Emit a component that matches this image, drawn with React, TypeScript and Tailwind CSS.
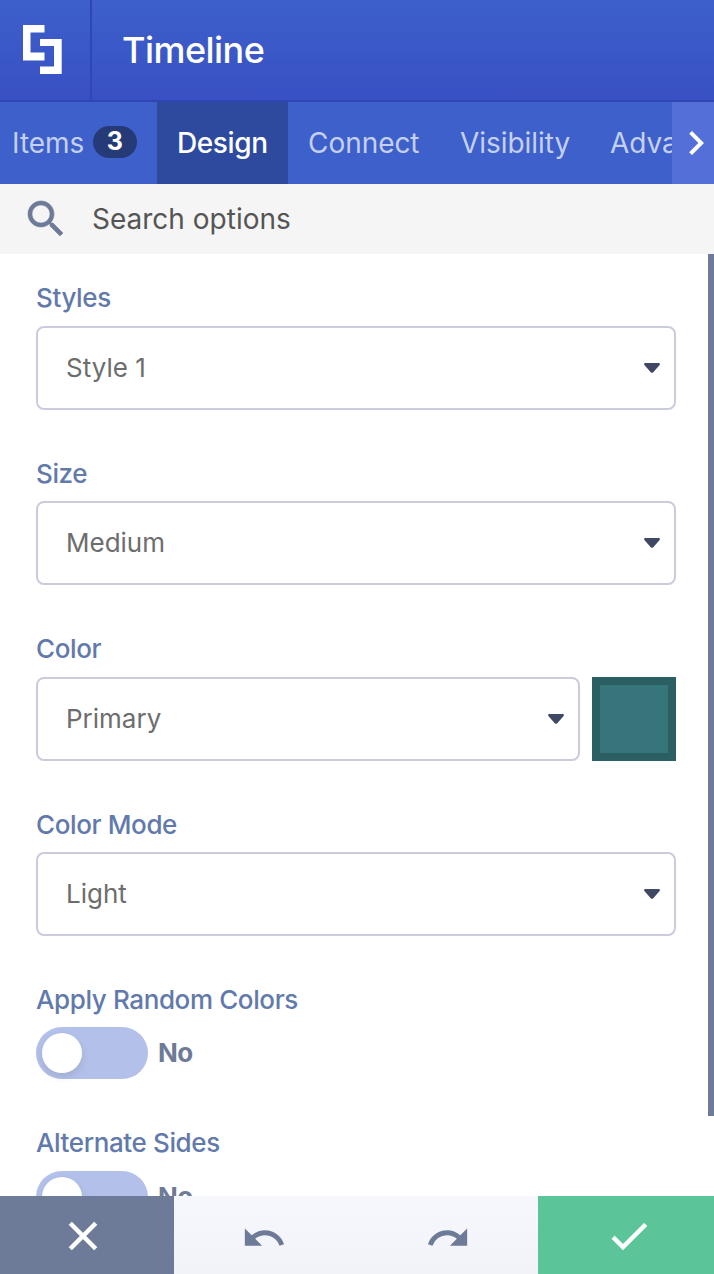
import { useState } from 'react';
import { MdChevronRight, MdRedo, MdUndo } from 'react-icons/md';

const tabs = [
  { name: 'Items', count: 3, className: 'w-[157px] pl-3' },
  { name: 'Design', className: 'w-[131px] pl-5' },
  { name: 'Connect', className: 'w-[152px] pl-5' },
  { name: 'Visibility', className: 'w-[150px] pl-5' },
  { name: 'Advanced', className: 'w-[170px] pl-5' },
];

const icons = {
  search:
    'M15.5 14h-.79l-.28-.27C15.41 12.590 16 11.110 16 9.500 16 5.910 13.090 3 9.500 3S3 5.910 3 9.500 5.910 16 9.500 16c1.610 0 3.090-.59 4.230-1.570l.27.28v.79l5 4.990L20.490 19l-4.990-5zm-6 0C7.010 14 5 11.990 5 9.500S7.010 5 9.500 5 14 7.010 14 9.500 11.990 14 9.500 14z',
  close: 'M19 6.410 17.590 5 12 10.590 6.410 5 5 6.410 10.590 12 5 17.590 6.410 19 12 13.410 17.590 19 19 17.590 13.410 12z',
  check: 'M9 16.170 4.830 12l-1.420 1.410L9 19 21 7l-1.410-1.410z',
};

const Icon = ({ name }: { name: keyof typeof icons }) => (
  <svg className="size-12" viewBox="0 0 24 24" fill="currentColor" stroke="currentColor" strokeWidth={0.3}>
    <path d={icons[name]} />
  </svg>
);

const Logo = () => (
  <svg className="h-[50px] w-10" viewBox="0 0 40 50" fill="#fff">
    <path d="M1 1h21.5v7.5h-14v20h14v8H1z" />
    <path d="M18 15h21.7v35H18v-7.5h14V22H18z" />
  </svg>
);

const Label = ({ children }: { children: string }) => (
  <span className="block h-8 text-[26px] leading-8 font-medium tracking-[-0.38px] text-[#6279ab]">{children}</span>
);

const SelectField = ({ label, value, swatch }: { label: string; value: string; swatch?: boolean }) => (
  <div className="h-[175.5px]">
    <Label>{label}</Label>
    <div className="mt-[11.9px] flex gap-3">
      <button className="flex h-[84px] flex-1 items-center justify-between rounded-lg border-2 border-[#caccde] bg-white pr-3.5 pl-7 text-[26px] text-[#6d6d6d]">
        <span className="pb-px">{value}</span>
        <svg className="h-2.5 w-4" viewBox="0 0 16 10" fill="#414863">
          <path d="M1 0h14q1.500.7.6 2L9.300 9.200q-1.300 1.300-2.600 0L.4 2Q-.5.7 1 0z" />
        </svg>
      </button>
      {swatch && <div className="size-[84px] border-8 border-[#2c5f63] bg-[#36767b]" />}
    </div>
  </div>
);

const ToggleField = ({ label }: { label: string }) => {
  const [on, setOn] = useState(false);

  return (
    <div className="h-[143.4px]">
      <Label>{label}</Label>
      <div className="mt-[11.2px] flex items-center gap-2.5">
        <button
          onClick={() => setOn(!on)}
          className={`flex h-[52px] w-28 items-center rounded-full px-1.5 ${on ? 'justify-end bg-[#3d60cb]' : 'bg-[#b3c0e9]'}`}
        >
          <span className="size-10 rounded-full bg-white shadow-[0_4px_8px_rgba(0,0,0,0.1)]" />
        </button>
        <span className="pb-px text-[26px] font-bold tracking-[-0.5px] text-[#6d7a98]">{on ? 'Yes' : 'No'}</span>
      </div>
    </div>
  );
};

export default function App() {
  const [active, setActive] = useState('Design');

  return (
    <div className="flex h-[1274px] w-[714px] flex-col overflow-hidden bg-white font-['Inter',sans-serif]">
      <header className="flex h-[102px] shrink-0 border-b-2 border-[#3046b5] bg-linear-to-b from-[#3d60cb] to-[#3850c3]">
        <div className="w-[92px] border-r-2 border-[#3046b5] pt-6 pl-[22px]">
          <Logo />
        </div>
        <h1 className="pl-[30px] text-[36px] leading-[100px] font-medium tracking-[-0.55px] text-white">Timeline</h1>
      </header>

      <nav className="flex h-[82px] shrink-0 bg-[#3d60cb]">
        <div className="flex min-w-0 flex-1 overflow-hidden">
          {tabs.map((tab) => (
            <button
              key={tab.name}
              onClick={() => setActive(tab.name)}
              className={`flex shrink-0 items-center text-[28px] ${tab.className} ${
                active === tab.name
                  ? 'bg-[#2e4a9f] font-medium tracking-[-0.4px] text-white'
                  : 'tracking-[-0.05px] text-[#c5d0f0]'
              }`}
            >
              {tab.name}
              {tab.count && (
                <span className="mb-0.5 ml-[9px] h-8 w-11 rounded-full bg-[#253a77] pr-px text-center text-[25px] leading-[31px] font-bold text-white">
                  {tab.count}
                </span>
              )}
            </button>
          ))}
        </div>
        <button className="flex w-[42px] items-center overflow-hidden bg-[#546fd7]">
          <MdChevronRight className="size-12 shrink-0 text-white" />
        </button>
      </nav>

      <div className="flex h-[70px] shrink-0 items-center bg-[#f5f5f5] pl-[22px] text-[#6d7a98]">
        <Icon name="search" />
        <span className="ml-[22px] text-[28px] text-[#555]">Search options</span>
      </div>

      <div className="flex min-h-0 flex-1 overflow-hidden">
        <main className="w-[708px] pt-7 pr-8 pl-9">
          <SelectField label="Styles" value="Style 1" />
          <SelectField label="Size" value="Medium" />
          <SelectField label="Color" value="Primary" swatch />
          <SelectField label="Color Mode" value="Light" />
          <ToggleField label="Apply Random Colors" />
          <ToggleField label="Alternate Sides" />
        </main>
        <div className="h-[862px] w-1.5 bg-[#6d7a98]" />
      </div>

      <footer className="flex h-[78px] shrink-0 bg-linear-to-b from-[#f7f8fd] to-[#f2f3f8] text-[#6d7a98]">
        <button className="flex w-[174px] items-center justify-center bg-[#6d7a98] pt-0.5 pr-2 text-white">
          <Icon name="close" />
        </button>
        <button className="flex flex-1 items-center justify-center pt-[5px] pr-0.5">
          <MdUndo className="size-[46px]" />
        </button>
        <button className="flex flex-1 items-center justify-center pt-[5px] pl-0.5">
          <MdRedo className="size-[46px]" />
        </button>
        <button className="flex w-44 items-center justify-center bg-[#5bc498] pt-0.5 pl-1.5 text-white">
          <Icon name="check" />
        </button>
      </footer>
    </div>
  );
}
